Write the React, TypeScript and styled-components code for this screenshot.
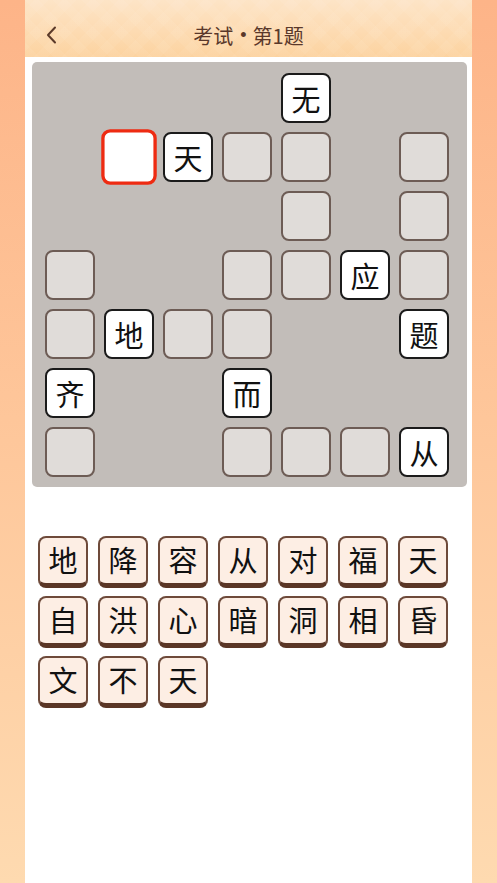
import React from "react";
import styled, { createGlobalStyle, css } from "styled-components";

const Global = createGlobalStyle`
  html, body { margin: 0; padding: 0; }
  body {
    background: linear-gradient(180deg, #fdb488 0%, #fec79b 50%, #fedab0 100%);
    font-family: "Noto Sans CJK SC", "Noto Sans", sans-serif;
    min-height: 883px;
  }
`;

const Page = styled.div`
  margin: 0 25px;
  min-height: 883px;
  background: #ffffff;
  display: flex;
  flex-direction: column;
`;

const Header = styled.header`
  height: 57px;
  position: relative;
  display: flex;
  align-items: center;
  justify-content: center;
  background:
    repeating-linear-gradient(45deg, rgba(255,255,255,0.05) 0 10px, rgba(255,255,255,0) 10px 20px),
    repeating-linear-gradient(-45deg, rgba(255,255,255,0.05) 0 10px, rgba(255,255,255,0) 10px 20px),
    linear-gradient(180deg, #fde4c6 0%, #fddab0 60%, #fcd3a0 100%);
`;

const Back = styled.button`
  position: absolute;
  left: 18px;
  top: 25px;
  width: 16px;
  height: 20px;
  padding: 0;
  border: 0;
  background: transparent;
  display: flex;
  align-items: center;
  justify-content: center;
`;

const Title = styled.h1`
  margin: 14px 0 0;
  font-size: 20px;
  font-weight: 400;
  color: #5a382a;
  display: flex;
  align-items: center;
`;

const Dot = styled.span`
  margin: 0 6px 0 7px;
  font-family: "Liberation Sans", sans-serif;
  font-size: 18px;
`;

const Board = styled.div`
  margin: 5px 5px 0 7px;
  background: #c2bdb9;
  border-radius: 5px;
  padding: 11px 18px 10px 13px;
  display: grid;
  grid-template-columns: repeat(7, 50px);
  grid-template-rows: repeat(7, 50px);
  gap: 9px;
`;

type CellKind = "given" | "empty" | "active";

const Cell = styled.div<{ $kind: CellKind; $r: number; $c: number }>`
  grid-row: ${(p) => p.$r + 1};
  grid-column: ${(p) => p.$c + 1};
  box-sizing: border-box;
  width: 50px;
  height: 50px;
  border-radius: 8px;
  display: flex;
  align-items: center;
  justify-content: center;
  font-size: 29px;
  color: #111;
  line-height: 1;
  ${(p) =>
    p.$kind === "given"
      ? css`
          background: #ffffff;
          border: 2.5px solid #1b1b1b;
        `
      : p.$kind === "active"
      ? css`
          background: #ffffff;
          border: 3.4px solid #ee2b12;
          transform: scale(1.11);
          border-radius: 8px;
        `
      : css`
          background: #e0dcd9;
          border: 2px solid #6d5c55;
        `}
`;

const Keys = styled.div`
  margin: 49px 0 0 13px;
  display: grid;
  grid-template-columns: repeat(7, 50px);
  column-gap: 10px;
  row-gap: 8px;
`;

const Key = styled.button`
  box-sizing: border-box;
  width: 50px;
  height: 52px;
  padding: 0 0 2px;
  border-radius: 8px;
  background: #fdeee4;
  border: 2px solid #6e4a3a;
  border-bottom: 5px solid #5a3626;
  display: flex;
  align-items: center;
  justify-content: center;
  font-family: "Noto Sans CJK SC", "Noto Sans", sans-serif;
  font-size: 29px;
  color: #111;
  line-height: 1;
`;

type C = { r: number; c: number; ch?: string; active?: boolean };

const cells: C[] = [
  { r: 0, c: 4, ch: "无" },
  { r: 1, c: 1, active: true },
  { r: 1, c: 2, ch: "天" },
  { r: 1, c: 3 },
  { r: 1, c: 4 },
  { r: 1, c: 6 },
  { r: 2, c: 4 },
  { r: 2, c: 6 },
  { r: 3, c: 0 },
  { r: 3, c: 3 },
  { r: 3, c: 4 },
  { r: 3, c: 5, ch: "应" },
  { r: 3, c: 6 },
  { r: 4, c: 0 },
  { r: 4, c: 1, ch: "地" },
  { r: 4, c: 2 },
  { r: 4, c: 3 },
  { r: 4, c: 6, ch: "题" },
  { r: 5, c: 0, ch: "齐" },
  { r: 5, c: 3, ch: "而" },
  { r: 6, c: 0 },
  { r: 6, c: 3 },
  { r: 6, c: 4 },
  { r: 6, c: 5 },
  { r: 6, c: 6, ch: "从" },
];

const keys = "地降容从对福天自洪心暗洞相昏文不天".split("");

export default function App() {
  return (
    <>
      <Global />
      <Page>
        <Header>
          <Back aria-label="返回">
            <svg width="11" height="18" viewBox="0 0 11 18">
              <path d="M9 1.5 L2 9 L9 16.5" fill="none" stroke="#5b3a2a" strokeWidth="2" strokeLinecap="round" strokeLinejoin="round" />
            </svg>
          </Back>
          <Title>
            考试<Dot>•</Dot>第1题
          </Title>
        </Header>
        <Board>
          {cells.map((c, i) => (
            <Cell
              key={i}
              $r={c.r}
              $c={c.c}
              $kind={c.active ? "active" : c.ch ? "given" : "empty"}
            >
              {c.ch}
            </Cell>
          ))}
        </Board>
        <Keys>
          {keys.map((k, i) => (
            <Key key={i}>{k}</Key>
          ))}
        </Keys>
      </Page>
    </>
  );
}
